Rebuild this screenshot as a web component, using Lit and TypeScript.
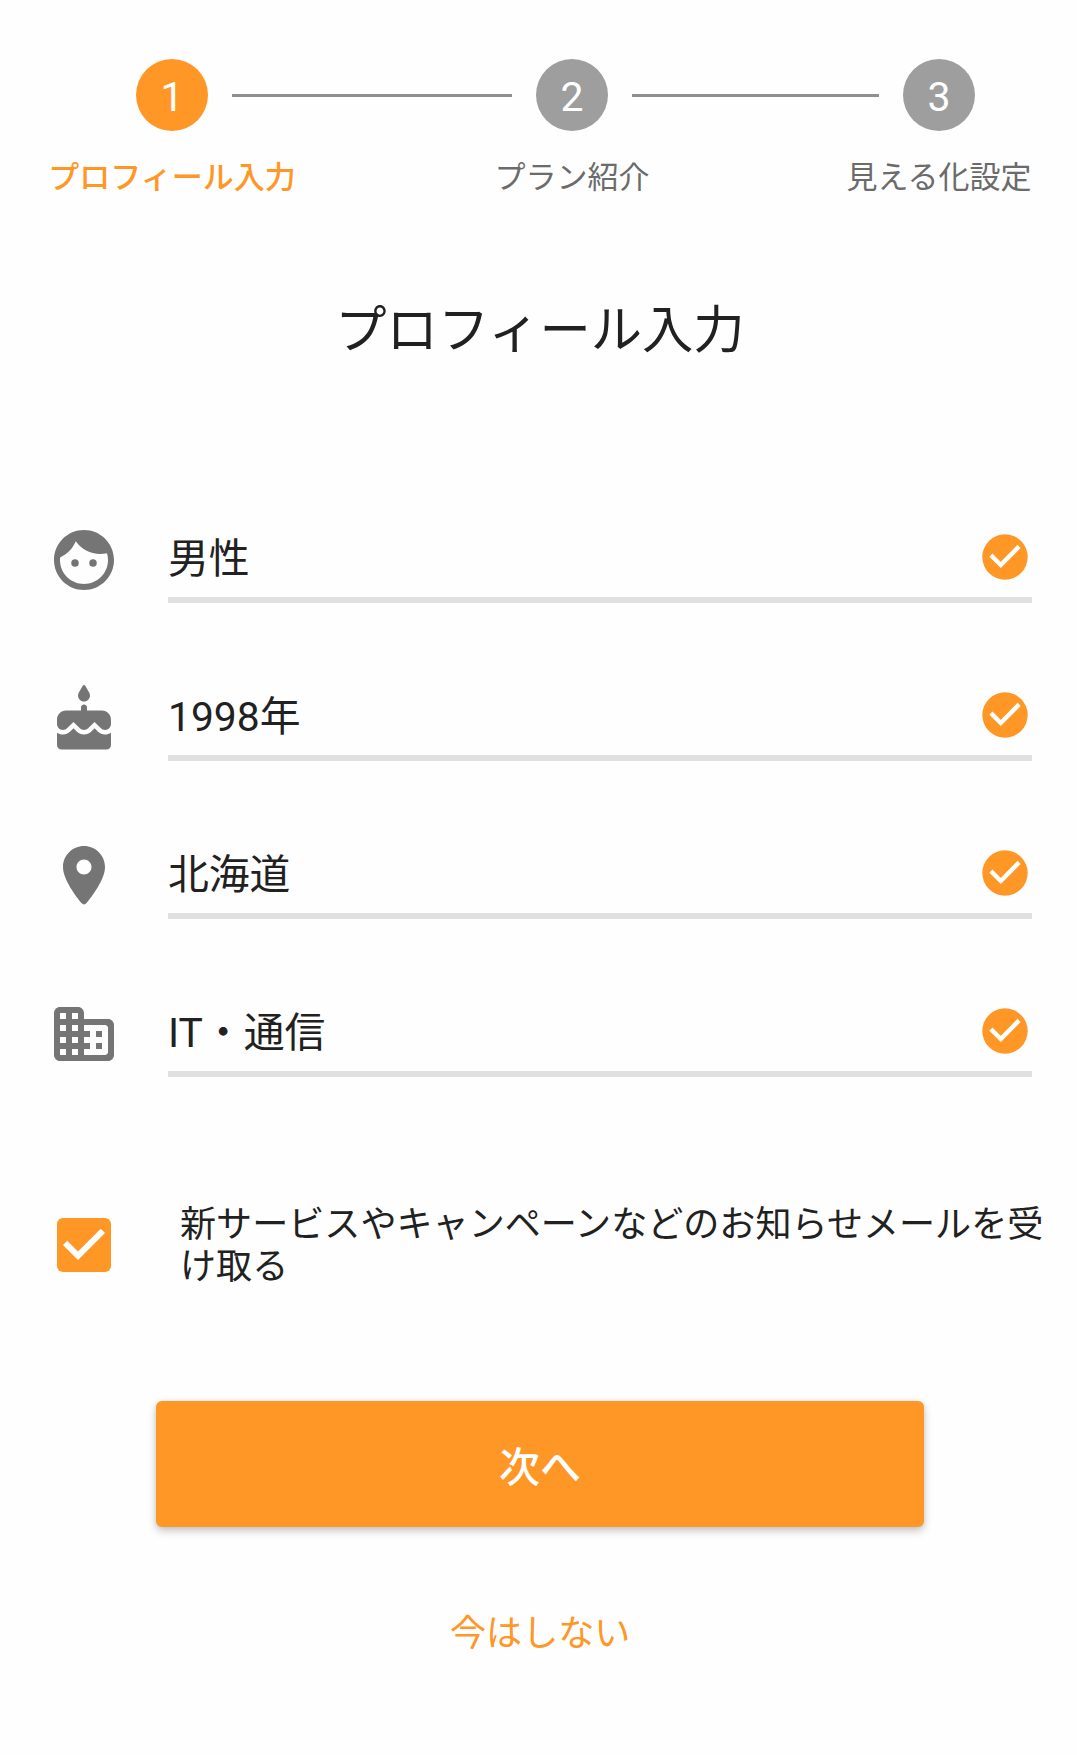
import { LitElement, html, css, svg } from "lit";
import { customElement, property, state } from "lit/decorators.js";

const ICONS: Record<string, string> = {
  face: "M9 11.75a1.25 1.25 0 1 0 0 2.5 1.25 1.25 0 0 0 0-2.5zm6 0a1.25 1.25 0 1 0 0 2.5 1.25 1.25 0 0 0 0-2.5zM12 2C6.48 2 2 6.48 2 12s4.48 10 10 10 10-4.48 10-10S17.52 2 12 2zm0 18c-4.41 0-8-3.59-8-8 0-.29.02-.58.05-.86 2.36-1.05 4.23-2.98 5.21-5.37C11.07 8.33 14.05 10 17.42 10c.78 0 1.53-.09 2.25-.26.21.71.33 1.47.33 2.26 0 4.41-3.59 8-8 8z",
  cake: "M12 6c1.11 0 2-.9 2-2 0-.38-.1-.73-.29-1.03l-1.28-2.22c-.19-.33-.67-.33-.86 0l-1.28 2.22C10.11 3.27 10 3.62 10 4c0 1.1.9 2 2 2zm4.6 9.99l-1.07-1.07-1.08 1.07c-1.3 1.3-3.58 1.31-4.89 0l-1.07-1.07-1.09 1.07C6.75 16.64 5.88 17 4.96 17c-.73 0-1.4-.23-1.96-.61V20.5c0 .83.67 1.5 1.5 1.5h15c.83 0 1.5-.67 1.5-1.5v-4.11c-.56.38-1.23.61-1.96.61-.92 0-1.79-.36-2.44-1.01zM18 9h-5V8c0-.55-.45-1-1-1s-1 .45-1 1v1H6c-1.66 0-3 1.34-3 3v1.54c0 1.08.88 1.96 1.96 1.96.52 0 1.02-.2 1.38-.57l2.14-2.13 2.13 2.13c.74.74 2.03.74 2.77 0l2.14-2.13 2.13 2.13c.37.37.86.57 1.38.57 1.08 0 1.96-.88 1.96-1.96V12c0-1.66-1.34-3-3-3z",
  place: "M12 2C8.13 2 5 5.13 5 9c0 4.17 4.42 9.92 6.24 12.11.4.48 1.13.48 1.53 0C14.58 18.92 19 13.17 19 9c0-3.87-3.13-7-7-7zm0 9.5c-1.38 0-2.5-1.12-2.5-2.5s1.12-2.5 2.5-2.5 2.5 1.12 2.5 2.5-1.12 2.5-2.5 2.5z",
  business: "M12 7V5c0-1.1-.9-2-2-2H4c-1.1 0-2 .9-2 2v14c0 1.1.9 2 2 2h16c1.1 0 2-.9 2-2V9c0-1.1-.9-2-2-2h-8zM6 19H4v-2h2v2zm0-4H4v-2h2v2zm0-4H4V9h2v2zm0-4H4V5h2v2zm4 12H8v-2h2v2zm0-4H8v-2h2v2zm0-4H8V9h2v2zm0-4H8V5h2v2zm9 12h-7v-2h2v-2h-2v-2h2v-2h-2V9h7c.55 0 1 .45 1 1v8c0 .55-.45 1-1 1zm-1-8h-2v2h2v-2zm0 4h-2v2h2v-2z",
};

@customElement("step-header")
class StepHeader extends LitElement {
  @property({ type: Array }) steps: string[] = [];
  @property({ type: Number }) current = 0;

  static styles = css`
    :host { display: block; }
    .steps {
      display: grid;
      grid-template-columns: 248px 198px 156px 196px 186px;
      padding: 59px 45px 0 48px;
    }
    .step { display: flex; flex-direction: column; align-items: center; }
    .dot {
      width: 72px; height: 72px; border-radius: 50%;
      background: #9e9e9e; color: #fff;
      display: flex; align-items: center; justify-content: center;
      font-size: 41px; line-height: 72px;
    }
    .num { padding-top: 3px; }
    .label {
      font-size: 31px; line-height: 44px; margin-top: 25px;
      color: #6b6b6b; white-space: nowrap;
    }
    .active .dot { background: #ff9727; }
    .active .label { color: #ff9727; font-weight: 500; }
    .line { height: 3px; background: #8f8f92; margin-top: 35px; }
    .line.first { margin-left: -64px; margin-right: -18px; }
    .line.second { margin-left: -18px; margin-right: -33px; }
  `;

  render() {
    return html`<div class="steps">
      ${this.steps.map((s, i) => html`
        ${i ? html`<div class="line ${i === 1 ? "first" : "second"}"></div>` : ""}
        <div class="step ${i === this.current ? "active" : ""}">
          <div class="dot"><span class="num">${i + 1}</span></div>
          <div class="label">${s}</div>
        </div>`)}
    </div>`;
  }
}

@customElement("profile-field")
class ProfileField extends LitElement {
  @property() icon = "";
  @property() value = "";

  static styles = css`
    :host { display: flex; height: 79px; align-items: flex-start; }
    .icon { width: 72px; height: 72px; fill: #757575; flex: none; }
    .field {
      flex: 1; margin-left: 48px; height: 79px; box-sizing: border-box;
      border-bottom: 6px solid #e0e0e0;
      display: flex; justify-content: space-between; align-items: flex-start;
    }
    .value { font-size: 40.8px; line-height: 60px; padding-top: 5px; color: #212121; }
    .ok { width: 46px; height: 46px; margin: 10px 4px 0 0; }
  `;

  render() {
    return html`
      <svg class="icon" viewBox=${this.icon === "cake" ? "0 -0.5 24 24" : "0 0 24 24"}>
        ${svg`<path d=${ICONS[this.icon]}></path>`}
      </svg>
      <div class="field">
        <span class="value">${this.value}</span>
        <svg class="ok" viewBox="0 0 46 46">
          <circle cx="23" cy="23" r="22.7" fill="#ff9727"></circle>
          <path d="M8.9 21.1L18.8 31L37.1 12.4" fill="none" stroke="#fff" stroke-width="4.4"></path>
        </svg>
      </div>`;
  }
}

@customElement("app-root")
class AppRoot extends LitElement {
  @state() subscribed = true;

  static styles = css`
    :host {
      display: block; height: 1755px; overflow: hidden; background: #fefefe;
      font-family: Roboto, "Noto Sans CJK JP", sans-serif; color: #212121;
    }
    .title {
      margin: 95px 0 0; text-align: center; font-size: 51.3px; line-height: 72px;
      font-weight: 400; padding-left: 3px;
    }
    .fields { display: flex; flex-direction: column; gap: 79px; padding: 157px 45px 0 48px; }
    .optin { display: flex; align-items: flex-start; height: 89px; padding: 122px 30px 0 57px; }
    .box { width: 54px; height: 54px; flex: none; margin-top: 19px; }
    .text { margin: 5px 0 0 69px; font-size: 36.1px; line-height: 42px; width: 870px; }
    .next {
      display: block; box-sizing: border-box; width: 768px; height: 126px; margin: 113px 0 0 156px;
      border: 0; border-radius: 6px; background: #ff9727; color: #fff;
      font: inherit; font-weight: 500; font-size: 41px; padding: 0;
      box-shadow: 0 4px 8px rgba(0, 0, 0, 0.22), 0 0 4px rgba(0, 0, 0, 0.08);
    }
    .skip {
      display: block; margin: 78px 0 0 450px; border: 0; padding: 0; background: none;
      color: #ff9727; font: inherit; font-size: 36.1px; line-height: 58px; white-space: nowrap;
    }
  `;

  render() {
    return html`
      <step-header .steps=${["プロフィール入力", "プラン紹介", "見える化設定"]} .current=${0}></step-header>
      <h1 class="title">プロフィール入力</h1>
      <div class="fields">
        <profile-field icon="face" value="男性"></profile-field>
        <profile-field icon="cake" value="1998年"></profile-field>
        <profile-field icon="place" value="北海道"></profile-field>
        <profile-field icon="business" value="IT・通信"></profile-field>
      </div>
      <div class="optin" @click=${() => (this.subscribed = !this.subscribed)}>
        <svg class="box" viewBox="3 3 18 18">
          <rect x="3" y="3" width="18" height="18" rx="2" fill="#ff9727"></rect>
          ${this.subscribed
            ? svg`<path d="M10 17l-5-5 1.41-1.41L10 14.17l7.59-7.59L19 8l-9 9z" fill="#fff"></path>`
            : ""}
        </svg>
        <div class="text">新サービスやキャンペーンなどのお知らせメールを受け取る</div>
      </div>
      <button class="next">次へ</button>
      <button class="skip">今はしない</button>
    `;
  }
}
